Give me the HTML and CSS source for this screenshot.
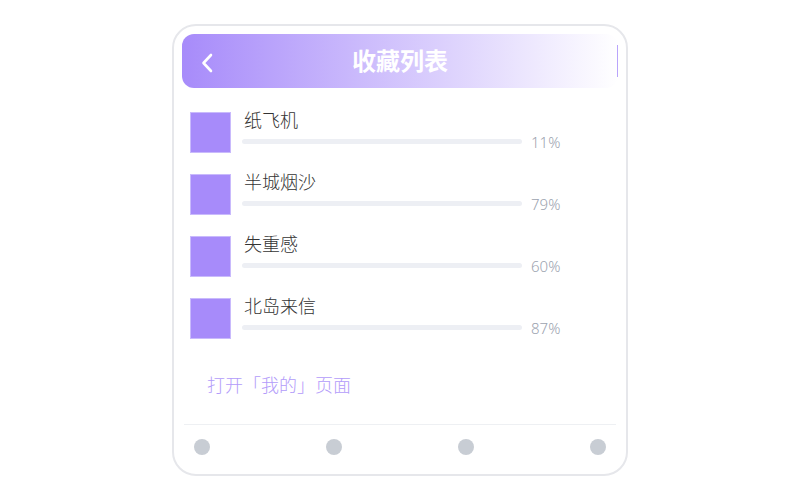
FILE: index.html
```html
<!DOCTYPE html>
<html lang="zh">
<head>
<meta charset="UTF-8">
<meta name="viewport" content="width=device-width, initial-scale=1.0">
<title>收藏列表</title>
<link rel="stylesheet" href="styles.css">
</head>
<body>

<div class="phone">
    <div class="header">
        <div class="back">
            <svg width="14" height="20" viewBox="0 0 14 20">
                <path d="M11 2 L3.5 10 L11 18" fill="none" stroke="#ffffff" stroke-width="2.6" stroke-linecap="round" stroke-linejoin="round"/>
            </svg>
        </div>
        <h1 class="title">收藏列表</h1>
        <div class="edge"><span class="edge-line"></span></div>
    </div>

    <div class="list">
        <div class="item">
            <div class="cover"></div>
            <div class="info">
                <div class="name">纸飞机</div>
                <div class="meter">
                    <div class="bar"></div>
                    <span class="pct">11%</span>
                </div>
            </div>
        </div>
        <div class="item">
            <div class="cover"></div>
            <div class="info">
                <div class="name">半城烟沙</div>
                <div class="meter">
                    <div class="bar"></div>
                    <span class="pct">79%</span>
                </div>
            </div>
        </div>
        <div class="item">
            <div class="cover"></div>
            <div class="info">
                <div class="name">失重感</div>
                <div class="meter">
                    <div class="bar"></div>
                    <span class="pct">60%</span>
                </div>
            </div>
        </div>
        <div class="item">
            <div class="cover"></div>
            <div class="info">
                <div class="name">北岛来信</div>
                <div class="meter">
                    <div class="bar"></div>
                    <span class="pct">87%</span>
                </div>
            </div>
        </div>
    </div>

    <a class="link" href="#">打开「我的」页面</a>

    <div class="tabs">
        <span class="dot"></span>
        <span class="dot"></span>
        <span class="dot"></span>
        <span class="dot"></span>
    </div>
</div>

</body>
</html>
```

FILE: styles.css
```css
body {
    margin: 0;
    padding: 0;
    background-color: #ffffff;
    font-family: "Noto Sans", "Noto Sans CJK SC", sans-serif;
}
.phone {
    box-sizing: border-box;
    width: 456px;
    height: 452px;
    margin: 24px auto 0;
    padding: 8px;
    border: 2px solid #e6e7eb;
    border-radius: 24px;
    display: flex;
    flex-direction: column;
}
.header {
    height: 54px;
    border-radius: 12px;
    background: linear-gradient(to right, #a78bfa, #ffffff);
    display: grid;
    grid-template-columns: 60px 1fr 60px;
    align-items: center;
}
.back {
    padding-left: 18px;
    display: flex;
    align-items: center;
    margin-top: 4px;
}
.title {
    margin: 0;
    text-align: center;
    color: #ffffff;
    font-size: 24px;
    font-weight: 700;
    line-height: 30px;
}
.edge {
    display: flex;
    justify-content: flex-end;
}
.edge-line {
    width: 1px;
    height: 32px;
    background-color: #b9a4fb;
}
.list {
    margin-top: 24px;
    display: flex;
    flex-direction: column;
    gap: 21px;
}
.item {
    display: flex;
    align-items: flex-start;
    padding-left: 8px;
}
.cover {
    box-sizing: border-box;
    width: 41px;
    height: 41px;
    background-color: #a78bfa;
    border: 1px solid #c9bafc;
}
.info {
    margin-top: -3px;
    margin-left: 11px;
    display: flex;
    flex-direction: column;
    gap: 1px;
}
.name {
    padding-left: 2px;
    font-size: 18px;
    font-weight: 300;
    line-height: 22px;
    color: #333333;
}
.meter {
    display: flex;
    align-items: center;
}
.bar {
    width: 280px;
    height: 5px;
    border-radius: 3px;
    background-color: #edeff4;
    margin-bottom: 2px;
}
.pct {
    margin-left: 9px;
    font-size: 15px;
    font-weight: 300;
    line-height: 20px;
    color: #9ca3af;
}
.link {
    margin-top: 34px;
    padding-left: 25px;
    font-size: 18px;
    font-weight: 300;
    line-height: 24px;
    color: #b39cfa;
    text-decoration: none;
}
.tabs {
    margin: auto 2px 0;
    padding: 14px 10px 11px;
    border-top: 1px solid #eef0f3;
    display: flex;
    justify-content: space-between;
}
.dot {
    width: 16px;
    height: 16px;
    border-radius: 50%;
    background-color: #c8cdd4;
}
```
